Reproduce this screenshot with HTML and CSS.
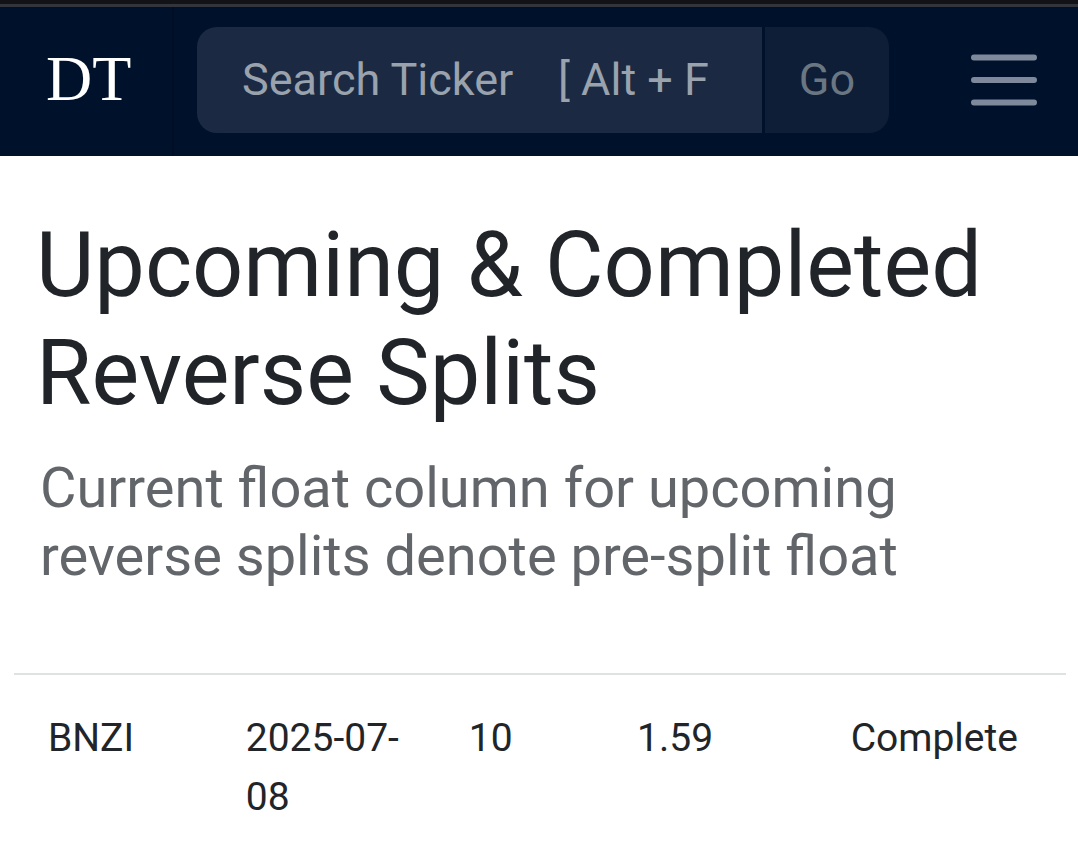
FILE: index.html
```html
<!DOCTYPE html>
<html lang="en">

<head>
    <meta charset="UTF-8">
    <meta name="viewport" content="width=device-width, initial-scale=1.0">
    <title>Upcoming &amp; Completed Reverse Splits</title>
    <link rel="stylesheet" href="styles.css">
</head>

<body>
    <header class="navbar">
        <a class="logo" href="#">DT</a>
        <form class="search">
            <input class="search-input" type="text" aria-label="Search Ticker" placeholder="Search Ticker&nbsp;&nbsp;&nbsp; [ Alt + F">
            <button class="search-btn" type="submit">Go</button>
        </form>
        <button class="menu" type="button" aria-label="Menu">
            <svg width="68" height="52" viewBox="0 0 68 52" fill="none" stroke="currentColor" stroke-width="6" stroke-linecap="round">
                <path d="M4 3.5H64M4 26H64M4 48.5H64" />
            </svg>
        </button>
    </header>
    <main class="content">
        <div class="title">
            <h1>Upcoming &amp; Completed Reverse Splits</h1>
            <p>Current float column for upcoming reverse splits denote pre-split float</p>
        </div>
        <table class="splits">
            <tbody>
                <tr>
                    <td class="ticker">BNZI</td>
                    <td class="date">2025-07-08</td>
                    <td class="ratio">10</td>
                    <td class="float">1.59</td>
                    <td class="status">Complete</td>
                </tr>
            </tbody>
        </table>
    </main>
</body>

</html>
```
FILE: styles.css
```css
* {
    margin: 0;
    padding: 0;
    box-sizing: border-box;
}

body {
    font-family: Roboto, "Liberation Sans", sans-serif;
    font-size: 45px;
    color: #212529;
    background: #fff;
    border-top: 4px solid #121317;
}

.navbar {
    display: flex;
    align-items: stretch;
    background: #00112b;
    border-top: 3px solid #33353d;
}

.logo {
    display: flex;
    align-items: center;
    width: 174px;
    padding: 0 0 6px 46px;
    border-right: 2px solid #000d25;
    font-family: "Liberation Serif", serif;
    font-size: 64px;
    line-height: 72px;
    color: #fff;
    text-decoration: none;
}

.search {
    display: flex;
    flex: 1;
    gap: 3px;
    min-width: 0;
    height: 106px;
    margin: 20px 81px 23px 23px;
}

.search-input,
.search-btn {
    padding-bottom: 2px;
    border: none;
    font-family: inherit;
    font-size: 45px;
}

.search-input {
    flex: 1;
    min-width: 0;
    padding-left: 45px;
    padding-right: 45px;
    border-radius: 20px 0 0 20px;
    color: #fff;
    background: #1b2a42;
}

.search-input::placeholder {
    color: #99a2ad;
    opacity: 1;
}

.search-btn {
    width: 124px;
    border-radius: 0 20px 20px 0;
    color: #6b7683;
    background: #0d1e36;
}

.menu {
    display: flex;
    align-items: center;
    margin-right: 40px;
    padding-bottom: 3px;
    border: none;
    color: #7f899c;
    background: none;
}

.content {
    padding: 56px 12px 0 14px;
}

.title {
    padding: 0 22px;
}

.title h1 {
    margin-bottom: 26px;
    font-size: 90px;
    font-weight: 400;
    line-height: 108px;
}

.title p {
    padding-left: 4px;
    font-size: 56px;
    line-height: 68px;
    color: #626569;
}

.splits {
    width: 100%;
    margin-top: 83px;
    table-layout: fixed;
    border-collapse: collapse;
    border-top: 2px solid #dee2e1;
    font-size: 39px;
    line-height: 59px;
}

.splits td {
    padding: 34px 30px 34px 34px;
    vertical-align: top;
}

.ticker {
    width: 18.8%;
}

.date {
    width: 21.2%;
}

.ratio {
    width: 16%;
}

.float {
    width: 20.3%;
}

.status {
    width: 23.7%;
}
```
